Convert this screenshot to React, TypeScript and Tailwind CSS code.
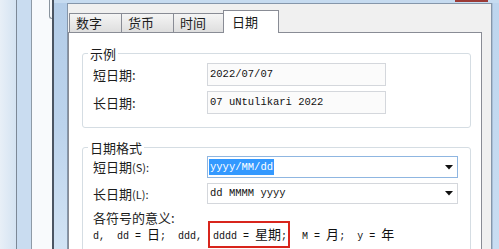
import React from "react";

const cjk = "font-['Noto_Sans_CJK_SC','Noto_Sans',sans-serif]";
const mono = "font-['Liberation_Mono','DejaVu_Sans_Mono',monospace]";

function Arrow() {
  return (
    <svg width="8" height="5" viewBox="0 0 8 5" className="shrink-0">
      <path d="M0 0 H8 L4 4.5 Z" fill="#111" />
    </svg>
  );
}

function Group({ title, className, children }: { title: string; className?: string; children: React.ReactNode }) {
  return (
    <div className={"relative border border-[#d5dde3] rounded-[3px] pl-[10px] " + (className ?? "")}>
      <span className="absolute left-[5px] -top-[8px] bg-white px-[2px] text-[13px] leading-[15px]">{title}</span>
      {children}
    </div>
  );
}

function Tab({ label, w, selected }: { label: string; w: string; selected?: boolean }) {
  if (selected) {
    return (
      <div className={"-ml-px relative z-20 h-[23px] bg-white border-l border-t border-r border-[#898c95] pl-[8px] text-[13px] leading-[19px] pt-[1px] " + w}>
        {label}
      </div>
    );
  }
  return (
    <div className={"-ml-px first:ml-0 mb-px h-[19px] bg-gradient-to-b from-[#f5f5f5] to-[#dedede] border-l border-t border-r border-[#898c95] pl-[6px] text-[13px] leading-[18px] " + w}>
      {label}
    </div>
  );
}

export default function App() {
  return (
    <div className={"flex w-[499px] h-[249px] overflow-hidden bg-white text-[#1c1c1c] " + cjk}>
      {/* windows behind, on the left */}
      <div className="flex h-full shrink-0">
        <div className="w-[16px] bg-gradient-to-r from-[#e8eff7] to-[#d4e3f2]" />
        <div className="w-px bg-[#7c8896]" />
        <div className="w-[14px] bg-[#c9dcf0]" />
        <div className="w-px bg-[#8e9aa6]" />
        <div className="w-[17px] bg-[#f8fafc]" />
        <div className="w-[3px] bg-[#f8fafc] flex flex-col">
          <div className="h-[19px] border-l border-b border-[#8a949e] rounded-bl-[3px]" />
        </div>
        <div className="w-[2px] bg-[#4b5563]" />
      </div>

      {/* active window */}
      <div className="flex-1 flex flex-col bg-[#c6dbf0]">
        <div className="h-[3px] flex shrink-0">
          <div className="flex-1" />
          <div className="w-[33px] h-[2px] bg-[#9b3a36]" />
          <div className="w-[11px]" />
        </div>
        <div className="flex-1 flex min-h-0">
          <div className="w-[13px] bg-gradient-to-b from-[#b4cde8] via-[#bcd3ec] to-[#d2e3f4]" />
          <div className="flex-1 flex flex-col bg-[#f0f0f0] border-l border-t border-r border-[#8596aa] pr-[9px] min-w-0">
            {/* tabs */}
            <div className="relative z-10 -mb-px flex items-end pt-[6px] pl-[1px] shrink-0">
              <Tab label="数字" w="w-[53px]" />
              <Tab label="货币" w="w-[53px]" />
              <Tab label="时间" w="w-[51px]" />
              <Tab label="日期" w="w-[56px]" selected />
            </div>
            {/* panel */}
            <div className="relative z-0 flex-1 bg-white border border-[#898c95] pt-[20px] pl-[13px] pr-[10px]">
              <Group title="示例" className="pt-[9px] pb-[13px]">
                <div className="flex flex-col gap-[5px]">
                  <div className="flex items-center">
                    <div className="w-[114px] text-[13px] leading-[15px]">短日期:</div>
                    <div className={"w-[179px] h-[23px] border border-[#d4d7dc] bg-[#fbfbfb] flex items-center pl-[2px] text-[10.5px] text-[#111] " + mono}>
                      2022/07/07
                    </div>
                  </div>
                  <div className="flex items-center">
                    <div className="w-[114px] text-[13px] leading-[15px]">长日期:</div>
                    <div className={"w-[179px] h-[23px] border border-[#d4d7dc] bg-[#fbfbfb] flex items-center pl-[2px] text-[10.5px] text-[#111] whitespace-pre " + mono}>
                      07 uNtulikari 2022
                    </div>
                  </div>
                </div>
              </Group>

              <Group title="日期格式" className="mt-[19px] pt-[8px] pb-[20px]">
                <div className="flex items-center">
                  <div className="w-[114px] text-[13px] leading-[15px]">
                    短日期<span className="text-[11px]">(S):</span>
                  </div>
                  <div className={"w-[251px] h-[22px] border border-[#8fb6e1] bg-white flex items-center justify-between pl-px pr-[4px] text-[10.5px] " + mono}>
                    <span className="bg-[#3399ff] text-white leading-[16px] px-px">yyyy/MM/dd</span>
                    <Arrow />
                  </div>
                </div>
                <div className="flex items-center mt-[5px]">
                  <div className="w-[114px] text-[13px] leading-[15px]">
                    长日期<span className="text-[11px]">(L):</span>
                  </div>
                  <div className={"w-[251px] h-[21px] border border-[#d4d7dc] bg-white flex items-center justify-between pl-[2px] pr-[4px] text-[10.5px] text-[#111] whitespace-pre " + mono}>
                    <span>dd MMMM yyyy</span>
                    <Arrow />
                  </div>
                </div>
                <div className="mt-[7px] text-[13px] leading-[13px]">各符号的意义:</div>
                <div className="mt-[2px] leading-[13px] whitespace-pre text-[#111]">
                  <span className={"text-[10px] " + mono}>d,  dd = </span>
                  <span className="text-[13px] leading-[13px]">日</span>
                  <span className={"text-[10px] " + mono}>;  ddd, </span>
                  <span className="inline-block border-2 border-[#d8251c] pl-[3px] pr-px py-[3px] -my-[5px]">
                    <span className={"text-[10px] " + mono}>dddd = </span>
                    <span className="text-[13px] leading-[13px]">星期</span>
                    <span className={"text-[10px] " + mono}>;</span>
                  </span>
                  <span className={"text-[10px] " + mono}>  M = </span>
                  <span className="text-[13px] leading-[13px]">月</span>
                  <span className={"text-[10px] " + mono}>;  y = </span>
                  <span className="text-[13px] leading-[13px]">年</span>
                </div>
              </Group>
            </div>
          </div>
          <div className="w-[7px] border-l border-[#a9bfd6] bg-gradient-to-b from-[#bdd5ee] to-[#c9ddf2]" />
        </div>
      </div>
    </div>
  );
}
